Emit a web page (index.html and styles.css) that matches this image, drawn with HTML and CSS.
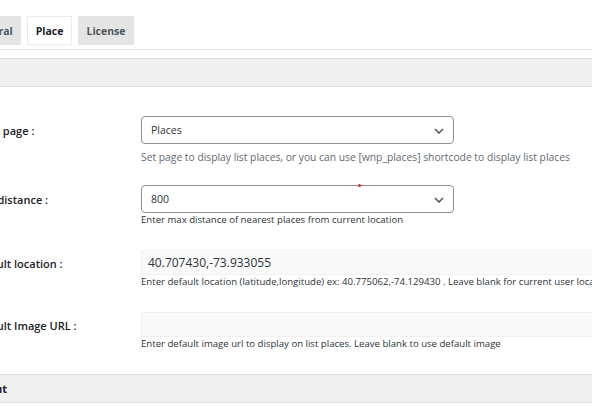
FILE: index.html
```html
<!DOCTYPE html>
<html>
<head>
<meta charset="utf-8">
<link rel="stylesheet" href="styles.css">
</head>
<body>
<div class="page">
  <nav class="tabs">
    <span class="tab">General</span>
    <span class="tab active">Place</span>
    <span class="tab">License</span>
  </nav>
  <div class="section-bar"></div>
  <div class="form">
    <div class="row row-1">
      <label class="label">Place page :</label>
      <div class="field">
        <div class="select">Places<svg class="chev" viewBox="0 0 10 6" width="10" height="6"><path d="M1 1 L5 5 L9 1" fill="none" stroke="#50575e" stroke-width="1.6"/></svg></div>
        <p class="desc desc-lg">Set page to display list places, or you can use [wnp_places] shortcode to display list places</p>
      </div>
    </div>
    <div class="row row-2">
      <label class="label">Max distance :</label>
      <div class="field">
        <div class="select">800<svg class="chev" viewBox="0 0 10 6" width="10" height="6"><path d="M1 1 L5 5 L9 1" fill="none" stroke="#50575e" stroke-width="1.6"/></svg><span class="dot"></span></div>
        <p class="desc">Enter max distance of nearest places from current location</p>
      </div>
    </div>
    <div class="row row-3">
      <label class="label">Default location :</label>
      <div class="field">
        <div class="input">40.707430,-73.933055</div>
        <p class="desc">Enter default location (latitude,longitude) ex: 40.775062,-74.129430 . Leave blank for current user location</p>
      </div>
    </div>
    <div class="row row-4">
      <label class="label">Default Image URL :</label>
      <div class="field">
        <div class="input"></div>
        <p class="desc">Enter default image url to display on list places. Leave blank to use default image</p>
      </div>
    </div>
  </div>
  <div class="section-bar section-bar-2"><span class="bar-title">Layout</span></div>
</div>
</body>
</html>
```
FILE: styles.css
```css
html, body {
  margin: 0;
  padding: 0;
  background: #ffffff;
  overflow: hidden;
}
body {
  font-family: "Open Sans", "Noto Sans", sans-serif;
  color: #1d2327;
  width: 592px;
  height: 420px;
}
.page {
  margin-left: -30px;
  width: 720px;
}
.tabs {
  display: flex;
  gap: 6px;
  padding-top: 16px;
  margin-left: -7px;
  border-bottom: 1px solid #e6e6e6;
  height: 29px;
  padding-bottom: 4px;
}
.tab {
  display: flex;
  align-items: center;
  padding: 0 7.5px;
  font-size: 10.5px;
  font-weight: 700;
  color: #50575e;
  background: #e4e4e4;
  border: 1px solid #e4e4e4;
  height: 27px;
}
.tab.active {
  background: #ffffff;
  border-color: #ebebeb;
  color: #1d2327;
}
.section-bar {
  margin-top: 8px;
  height: 27px;
  background: #f0f0f0;
  border-top: 1px solid #dcdcdc;
  border-bottom: 1px solid #e2e2e2;
  font-size: 11px;
  font-weight: 700;
  display: flex;
  align-items: center;
}
.section-bar-2 {
  margin-top: 0;
  color: #1d2327;
}
.bar-title {
  margin-left: -1px;
}
.form {
  padding-top: 29px;
}
.row {
  display: flex;
}
.label {
  width: 171px;
  flex: none;
  font-size: 11px;
  font-weight: 600;
  color: #1d2327;
  line-height: 29px;
  padding-left: 2px;
  box-sizing: border-box;
}
.field {
  flex: 1;
  min-width: 0;
}
.select {
  position: relative;
  height: 26px;
  border: 1px solid #8c8f94;
  border-radius: 4px;
  font-size: 10.5px;
  line-height: 26px;
  padding-left: 9px;
  color: #2c3338;
  width: 302px;
}
.chev {
  position: absolute;
  right: 9px;
  top: 11px;
}
.dot {
  position: absolute;
  left: 216px;
  top: -2px;
  width: 3px;
  height: 3px;
  border-radius: 50%;
  background: #e02424;
}
.desc {
  margin: 0;
  font-size: 9.6px;
  color: #2c3338;
  line-height: 14px;
  white-space: nowrap;
}
.desc-lg {
  font-size: 10.3px;
  color: #646970;
  margin-top: 4px;
  line-height: 18px;
}
.row-1 { height: 69px; }
.row-2 { height: 65px; }
.row-3 { height: 62px; }
.row-4 { height: 62px; }
.row-3 .label, .row-4 .label {
  line-height: 27px;
}
.input {
  height: 23px;
  background: #f9f9f9;
  border: 1px solid #f1f1f1;
  font-size: 12px;
  line-height: 23px;
  padding-left: 6px;
  color: #2c3338;
}
```
